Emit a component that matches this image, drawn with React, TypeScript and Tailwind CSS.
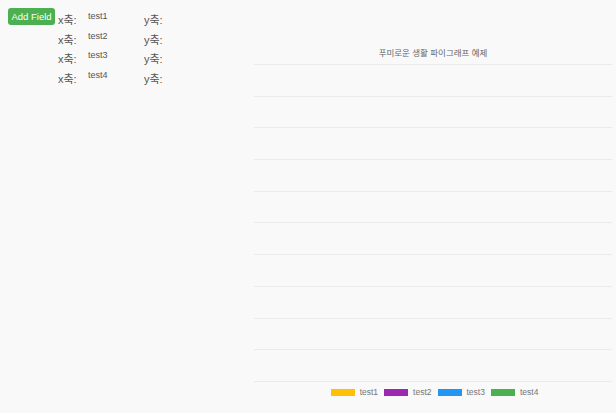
import React from 'react';

const rows = ['test1', 'test2', 'test3', 'test4'];
const legend = [
  { label: 'test1', color: 'bg-[#ffc107]' },
  { label: 'test2', color: 'bg-[#9c27b0]' },
  { label: 'test3', color: 'bg-[#2196f3]' },
  { label: 'test4', color: 'bg-[#4caf50]' },
];

export default function App() {
  return (
    <div className="w-[616px] h-[413px] bg-[#f9f9f9] flex font-['Liberation_Sans','Noto_Sans_CJK_KR',sans-serif]">
      <div className="flex items-start pl-2 pt-2 w-[254px]">
        <button className="w-[47px] bg-[#4caf50] text-white text-[9.5px] font-medium leading-none py-[4px] rounded-[3px] h-[17px] text-center">
          Add Field
        </button>
        <div className="flex flex-col pt-[3px] ml-[3px]">
          {rows.map((r) => (
            <div key={r} className="flex items-start h-[19.7px] text-[#555]">
              <span className="w-[30px] text-[11px] leading-[14px] pt-[2px]">x축:</span>
              <span className="w-[56px] text-[9px] leading-[10px] text-[#555]">{r}</span>
              <span className="text-[11px] leading-[14px] pt-[2px]">y축:</span>
            </div>
          ))}
        </div>
      </div>
      <div className="w-[358px] flex flex-col pt-[48px]">
        <div className="text-center text-[8.5px] leading-[10px] text-[#666]">푸미로운 생활 파이그래프 예제</div>
        <div className="flex flex-col justify-between h-[318px] mt-[6px]">
          {Array.from({ length: 11 }).map((_, i) => (
            <div key={i} className="border-t border-[#ebebeb]" />
          ))}
        </div>
        <div className="flex justify-center gap-[6px] mt-[5px] pl-[3px]">
          {legend.map((l) => (
            <div key={l.label} className="flex items-center gap-[5px]">
              <span className={`w-[24px] h-[7px] ${l.color}`} />
              <span className="text-[8.5px] leading-[10px] text-[#777]">{l.label}</span>
            </div>
          ))}
        </div>
      </div>
    </div>
  );
}
